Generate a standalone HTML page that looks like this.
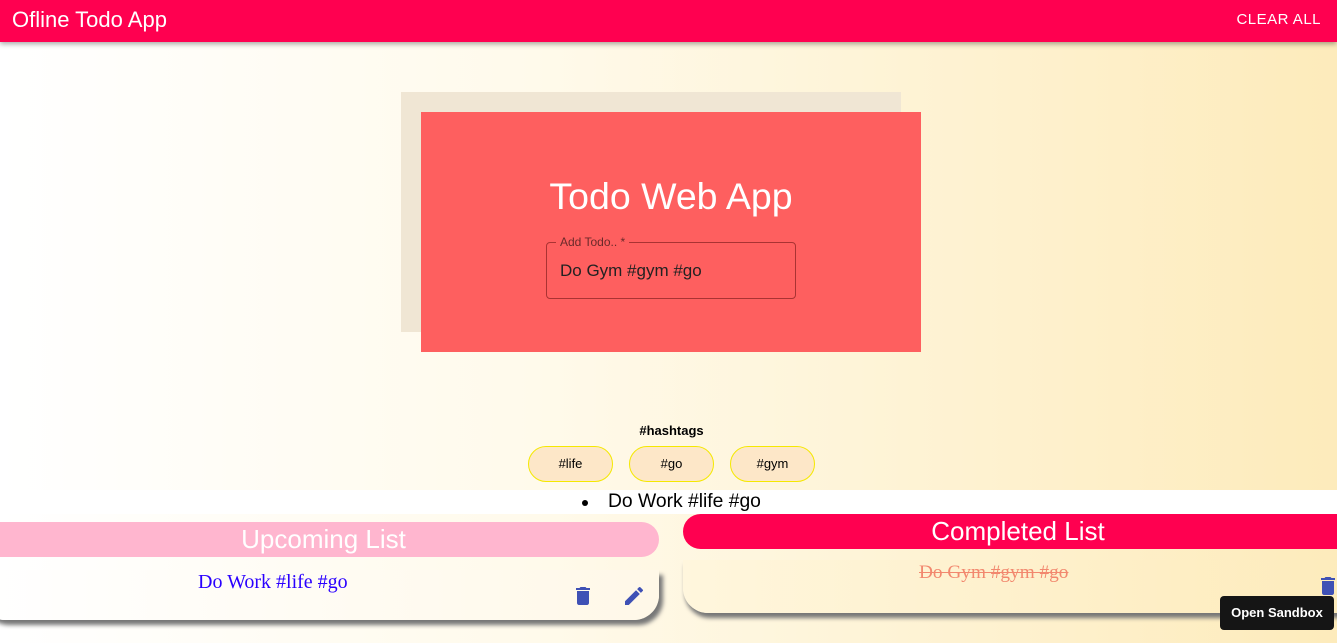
<!DOCTYPE html>
<html><head><style>
*{box-sizing:border-box;margin:0;padding:0}
body{width:1337px;height:643px;overflow:hidden;font-family:"Liberation Sans",sans-serif;background:linear-gradient(90deg,#fff 0%,#fffaeb 40%,#fdebbb 100%);position:relative}
.hdr{position:absolute;left:0;top:0;width:1337px;height:42px;background:#ff0050;box-shadow:0 2px 5px rgba(0,0,0,.35);color:#fff}
.hdr .t{position:absolute;left:12px;top:7px;font-size:22px}
.hdr .c{position:absolute;right:16px;top:11px;font-size:15px;letter-spacing:.5px}
.back{position:absolute;left:401px;top:92px;width:500px;height:240px;background:#f0e6d4}
.front{position:absolute;left:421px;top:112px;width:500px;height:240px;background:#fe5f5f;color:#fff}
.front h1{position:absolute;left:0;width:100%;top:63px;text-align:center;font-weight:normal;font-size:37.5px}
.fld{position:absolute;left:125px;top:130px;width:250px;height:57px;border:1px solid #a33;border-radius:4px}
.fld .l{position:absolute;left:9px;top:-8px;font-size:12px;color:#6a2a2a;background:#fe5f5f;padding:0 4px}
.fld .v{position:absolute;left:13px;top:18px;font-size:17px;color:#222}
.ht{position:absolute;top:423px;left:3px;width:100%;text-align:center;font-size:13px;font-weight:bold}
.chip{position:absolute;top:446px;width:85px;height:36px;border:1px solid #f5e800;border-radius:18px;background:#fde7c8;font-size:13px;text-align:center;line-height:34px}
.band{position:absolute;left:0;top:490px;width:1337px;height:24px;background:#fff}
.band span{position:absolute;left:608px;top:1px;font-size:19.3px}
.band i{position:absolute;left:582px;top:10px;width:6px;height:6px;border-radius:50%;background:#000}
.uh{position:absolute;left:-20px;top:522px;width:679px;height:35px;background:#ffb6cf;border-radius:18px;color:#fff;font-size:26px;text-align:center;line-height:35px;padding-left:8px}
.uc{position:absolute;left:-20px;top:570px;width:679px;height:50px;border-radius:0 0 25px 25px;box-shadow:4px 5px 4px #777;background:linear-gradient(90deg,#fff,#fff8e8)}
.uc .x{position:absolute;left:218px;top:1px;font-family:"Liberation Serif",serif;font-size:20px;color:#2a00ff}
.ch{position:absolute;left:683px;top:514px;width:680px;height:35px;background:#ff0050;border-radius:18px;color:#fff;font-size:26px;text-align:center;line-height:35px;padding-left:-10px;padding-right:10px}
.cc{position:absolute;left:683px;top:560px;width:680px;height:53px;border-radius:0 0 0 25px;box-shadow:2px 5px 4px #777;background:linear-gradient(90deg,#fff6dd,#fdebbb)}
.cc .x{position:absolute;left:236px;top:2px;font-family:"Liberation Serif",serif;font-size:19.3px;color:#f2886e;text-decoration:line-through}
.sb{position:absolute;left:1220px;top:596px;width:114px;height:34px;background:#151515;border-radius:4px;color:#fff;font-size:13px;font-weight:bold;text-align:center;line-height:34px}
</style></head><body>
<div class="hdr"><div class="t">Ofline Todo App</div><div class="c">CLEAR ALL</div></div>
<div class="back"></div>
<div class="front"><h1>Todo Web App</h1><div class="fld"><span class="l">Add Todo.. *</span><span class="v">Do Gym #gym #go</span></div></div>
<div class="ht">#hashtags</div>
<div class="chip" style="left:528px">#life</div>
<div class="chip" style="left:629px">#go</div>
<div class="chip" style="left:730px">#gym</div>
<div class="band"><i></i><span>Do Work #life #go</span></div>
<div class="uh">Upcoming List</div>
<div class="uc"><span class="x">Do Work #life #go</span>
<svg style="position:absolute;left:591px;top:14px" width="24" height="24" viewBox="0 0 24 24"><path fill="#3f51b5" d="M6 19c0 1.1.9 2 2 2h8c1.1 0 2-.9 2-2V7H6v12zM19 4h-3.5l-1-1h-5l-1 1H5v2h14V4z"/></svg>
<svg style="position:absolute;left:642px;top:14px" width="24" height="24" viewBox="0 0 24 24"><path fill="#3f51b5" d="M3 17.25V21h3.75L17.81 9.94l-3.75-3.75L3 17.25zM20.71 7.04a1 1 0 000-1.41l-2.34-2.34a1 1 0 00-1.41 0l-1.83 1.83 3.75 3.75 1.83-1.83z"/></svg>
</div>
<div class="ch">Completed List</div>
<div class="cc"><span class="x">Do Gym #gym #go</span>
<svg style="position:absolute;left:633px;top:14px" width="24" height="24" viewBox="0 0 24 24"><path fill="#3f51b5" d="M6 19c0 1.1.9 2 2 2h8c1.1 0 2-.9 2-2V7H6v12zM19 4h-3.5l-1-1h-5l-1 1H5v2h14V4z"/></svg>
</div>
<div class="sb">Open Sandbox</div>
</body></html>
